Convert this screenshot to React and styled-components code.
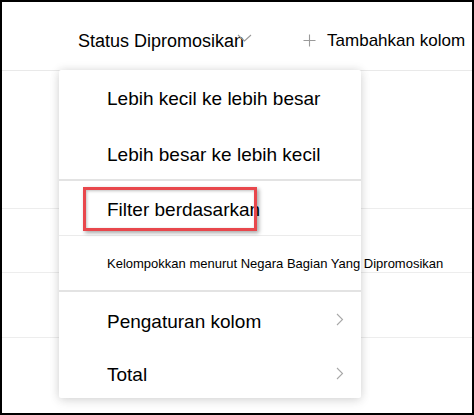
import styled, { createGlobalStyle } from "styled-components";

const GlobalStyle = createGlobalStyle`
  body {
    margin: 0;
    font-family: "Liberation Sans", Arial, sans-serif;
    color: #000;
    background: #fff;
  }
`;

const Frame = styled.div`
  position: relative;
  width: 474px;
  height: 415px;
  box-sizing: border-box;
  border: 2px solid #000;
  overflow: hidden;
  background: #fff;
`;

const Header = styled.div`
  display: flex;
  align-items: center;
  height: 69px;
  box-sizing: border-box;
  padding-top: 10px;
  border-bottom: 1px solid #e9e9e9;
`;

const ColumnTitle = styled.span`
  margin-left: 76px;
  font-size: 18px;
  white-space: nowrap;
`;

const SortChevron = styled.svg`
  margin-left: -7px;
  margin-bottom: 6px;
  flex: none;
`;

const AddIcon = styled.svg`
  margin-left: 51px;
  margin-bottom: 2px;
  flex: none;
`;

const AddLabel = styled.span`
  margin-left: 11px;
  font-size: 17px;
  white-space: nowrap;
`;

const Row = styled.div`
  height: ${(p) => p.$h}px;
  box-sizing: border-box;
  border-bottom: 1px solid #ededed;
`;

const Menu = styled.div`
  position: absolute;
  left: 57px;
  top: 68px;
  width: 302px;
  height: 328px;
  background: #fff;
  border-radius: 2px;
  box-shadow: 0 0 10px rgba(0, 0, 0, 0.13), 0 4px 12px rgba(0, 0, 0, 0.08);
  display: flex;
  flex-direction: column;
`;

const Item = styled.div`
  position: relative;
  display: flex;
  align-items: center;
  justify-content: space-between;
  height: ${(p) => p.$h}px;
  padding: ${(p) => p.$pt || 0}px 17px 0 48px;
  box-sizing: border-box;
  font-size: ${(p) => (p.$small ? 13 : 19)}px;
  white-space: nowrap;
  flex: none;
`;

const Divider = styled.div`
  height: ${(p) => (p.$thick ? 2 : 1)}px;
  background: ${(p) => (p.$thick ? "#e3e3e3" : "#ebebeb")};
  flex: none;
`;

const SubArrow = styled.svg`
  flex: none;
  margin-bottom: 4px;
`;

const Highlight = styled.div`
  position: absolute;
  left: 24px;
  top: 6px;
  width: 174px;
  height: 44px;
  box-sizing: border-box;
  border: 3px solid #e8474c;
  box-shadow: 2px 2px 4px rgba(0, 0, 0, 0.35),
    inset 1px 1px 3px rgba(0, 0, 0, 0.25);
  pointer-events: none;
`;

const Arrow = () => (
  <SubArrow width="8" height="13" viewBox="0 0 8 13">
    <polyline points="1,1 6.5,6.5 1,12" fill="none" stroke="#a8a8a8" strokeWidth="1.1" />
  </SubArrow>
);

const App = () => {
  return (
    <>
      <GlobalStyle />
      <Frame>
        <Header>
          <ColumnTitle>Status Dipromosikan</ColumnTitle>
          <SortChevron width="15" height="8" viewBox="0 0 15 8">
            <polyline points="1,1 7.5,7 14,1" fill="none" stroke="#9a9a9a" strokeWidth="1.1" />
          </SortChevron>
          <AddIcon width="13" height="13" viewBox="0 0 13 13">
            <path d="M6.5 0.5v12M0.5 6.5h12" stroke="#9a9a9a" strokeWidth="1.1" />
          </AddIcon>
          <AddLabel>Tambahkan kolom</AddLabel>
        </Header>
        <Row $h={138} />
        <Row $h={64} />
        <Row $h={65} />

        <Menu>
          <Item $h={57}>Lebih kecil ke lebih besar</Item>
          <Item $h={52} $pt={4}>Lebih besar ke lebih kecil</Item>
          <Divider $thick />
          <Item $h={54} $pt={4}>
            Filter berdasarkan
            <Highlight />
          </Item>
          <Divider />
          <Item $h={54} $small>
            Kelompokkan menurut Negara Bagian Yang Dipromosikan
          </Item>
          <Divider $thick />
          <Item $h={54} $pt={5}>
            Pengaturan kolom
            <Arrow />
          </Item>
          <Item $h={52} $pt={6}>
            Total
            <Arrow />
          </Item>
        </Menu>
      </Frame>
    </>
  );
};

export default App;
